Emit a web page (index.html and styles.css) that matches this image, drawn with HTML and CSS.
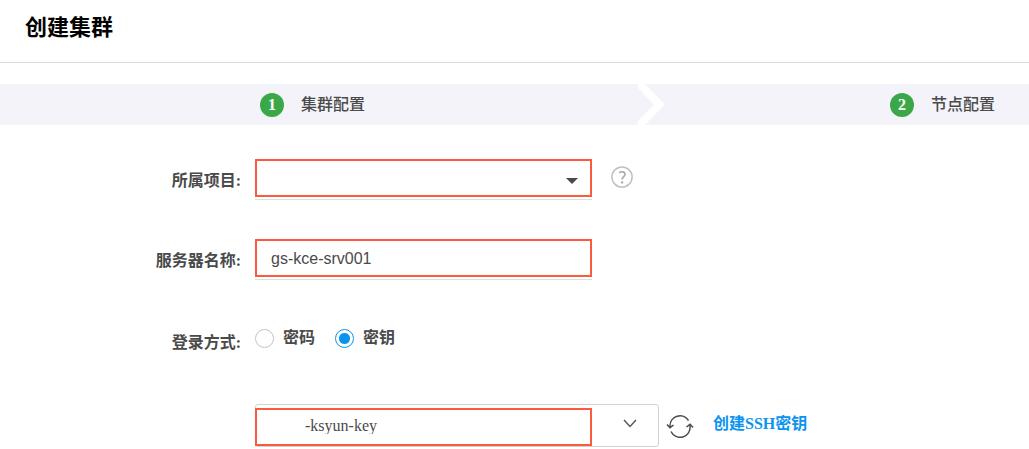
FILE: index.html
```html
<!DOCTYPE html>
<html lang="zh-CN">
<head>
<meta charset="utf-8">
<title>创建集群</title>
<link rel="stylesheet" href="styles.css">
</head>
<body>
<header class="page-header"><h1 class="page-title">创建集群</h1></header>
<main>
  <ol class="steps">
    <li class="step step-first">
      <span class="step-number">1</span><span>集群配置</span>
      <svg class="step-arrow" width="27" height="41" viewBox="0 0 27 41" aria-hidden="true"><path d="M0 0H7L27 20.5L7 41H0V37L16 20.5L0 4Z" fill="#fff"/></svg>
    </li>
    <li class="step step-last"><span class="step-number">2</span><span>节点配置</span></li>
  </ol>
  <form class="form">
    <div class="row">
      <label class="label" for="project">所属项目:</label>
      <div class="field help-field">
        <div class="box">
          <select class="control" id="project"><option></option></select>
          <svg class="caret" width="12" height="6" viewBox="0 0 12 6" aria-hidden="true"><path d="M0 0H12L6 6Z" fill="#4a4a4a"/></svg>
        </div>
        <button class="icon-button help-button" type="button" aria-label="帮助">
          <svg width="22" height="22" viewBox="0 0 22 22" fill="none" aria-hidden="true"><circle cx="11" cy="11" r="10.1" stroke="#c0c0c0" stroke-width="1.5"/><path d="M8.2 6.9C9.5 5.3 14 5.1 14 8.2C14 10.7 11.1 10.8 11.1 13.6" stroke="#aaa" stroke-width="1.7"/><circle cx="11.1" cy="16.4" r="1.2" fill="#aaa"/></svg>
        </button>
      </div>
    </div>
    <div class="row">
      <label class="label" for="server">服务器名称:</label>
      <div class="field">
        <div class="box"><input class="control" id="server" type="text" value="gs-kce-srv001"></div>
      </div>
    </div>
    <div class="row" role="radiogroup" aria-labelledby="login">
      <span class="label" id="login">登录方式:</span>
      <div class="field choices">
        <label class="choice"><input class="radio" type="radio" name="login"><span>密码</span></label>
        <label class="choice"><input class="radio" type="radio" name="login" checked><span>密钥</span></label>
      </div>
    </div>
    <div class="row">
      <span class="label"></span>
      <div class="field key-field">
        <div class="key-box">
          <select class="key-select" aria-label="密钥"><option>-ksyun-key</option></select>
          <span class="highlight"></span>
          <svg class="key-caret" width="14" height="9" viewBox="0 0 14 9" fill="none" aria-hidden="true"><path d="M1 1L7 7.5L13 1" stroke="#555" stroke-width="1.4"/></svg>
        </div>
        <button class="icon-button" type="button" aria-label="刷新">
          <svg width="28" height="24" viewBox="0 0 28 24" fill="none" stroke="#4a4a4a" stroke-width="1.5" aria-hidden="true"><path d="M4 13.5V12A10 10 0 0 1 22.5 6.5M24 10.5V12A10 10 0 0 1 5 17.5"/><path d="M1 10.5L4 13.7L7.5 11M20.5 13L24 10.3L27 13.5"/></svg>
        </button>
        <a class="link" href="#">创建SSH密钥</a>
      </div>
    </div>
  </form>
</main>
</body>
</html>
```
FILE: styles.css
```css
* { box-sizing: border-box; }

body {
  margin: 0;
  background: #fff;
  color: #4a4a4a;
  font: 16px/24px "Liberation Serif", "Noto Sans CJK SC", serif;
}

.page-header {
  padding: 12px 25px 18px;
  border-bottom: 1px solid #d9d9d9;
}

.page-title {
  margin: 0;
  color: #000;
  font-size: 22px;
  font-weight: 700;
  line-height: 32px;
}

.steps {
  display: grid;
  grid-template-columns: 62% 1fr;
  margin: 21px 0 0;
  padding: 0;
  list-style: none;
  background: #f4f3f9;
}

.step {
  position: relative;
  display: flex;
  align-items: center;
  gap: 17px;
  height: 41px;
  font-weight: 500;
}

.step-first { justify-content: center; padding-right: 13px; }
.step-last { justify-content: flex-end; padding-right: 34px; }

.step-number {
  width: 24px;
  height: 24px;
  border-radius: 50%;
  background: #3aa848;
  color: #fff;
  font-weight: 700;
  text-align: center;
}

.step-arrow { position: absolute; top: 0; left: 100%; }

.form {
  display: grid;
  gap: 39px;
  padding: 34px 0 2px;
}

.row {
  display: grid;
  grid-template-columns: 241px 1fr;
  align-items: center;
  column-gap: 14px;
}

.label { padding-top: 2px; font-weight: 700; text-align: right; }

.field { display: flex; align-items: center; gap: 19px; }

.box {
  position: relative;
  width: 337px;
  padding-bottom: 2px;
  border-bottom: 1px solid #ddd;
}

.control {
  display: block;
  width: 100%;
  height: 38px;
  padding: 2px 14px 0;
  border: 2px solid #fb5a3c;
  border-radius: 0;
  appearance: none;
  background: #fff;
  color: #4a4a4a;
  font: 16px "Liberation Sans", "Noto Sans CJK SC", sans-serif;
}

.caret {
  position: absolute;
  top: 19px;
  right: 14px;
  pointer-events: none;
}

.icon-button {
  display: flex;
  padding: 0;
  border: 0;
  background: none;
}

.help-field { align-items: flex-start; }

.help-button { padding-top: 7px; }

.choices { gap: 20px; height: 46px; align-items: flex-start; }

.choice { display: flex; align-items: center; gap: 9px; padding-top: 7px; font-weight: 700; }

.radio {
  width: 19px;
  height: 19px;
  margin: 0;
  border: 1px solid #c4c4c4;
  border-radius: 50%;
  appearance: none;
}

.radio:checked {
  border-color: #0b93f0;
  background: radial-gradient(circle, #0b93f0 5px, transparent 6px);
}

.key-field { gap: 7px; }

.key-box { position: relative; width: 404px; }

.key-select {
  display: block;
  width: 100%;
  height: 43px;
  padding: 0 49px;
  border: 1px solid #d2d2d2;
  border-radius: 3px;
  appearance: none;
  background: #fff;
  color: #4a4a4a;
  font: 16px "Liberation Serif", "Noto Sans CJK SC", serif;
}

.highlight {
  position: absolute;
  top: 4px;
  left: 0;
  width: 337px;
  height: 38px;
  border: 2px solid #fb5a3c;
  pointer-events: none;
}

.key-caret {
  position: absolute;
  top: 15px;
  right: 22px;
  pointer-events: none;
}

.link {
  margin-left: 12px;
  padding-bottom: 3px;
  color: #0b93f0;
  font-weight: 700;
  text-decoration: none;
}
```
